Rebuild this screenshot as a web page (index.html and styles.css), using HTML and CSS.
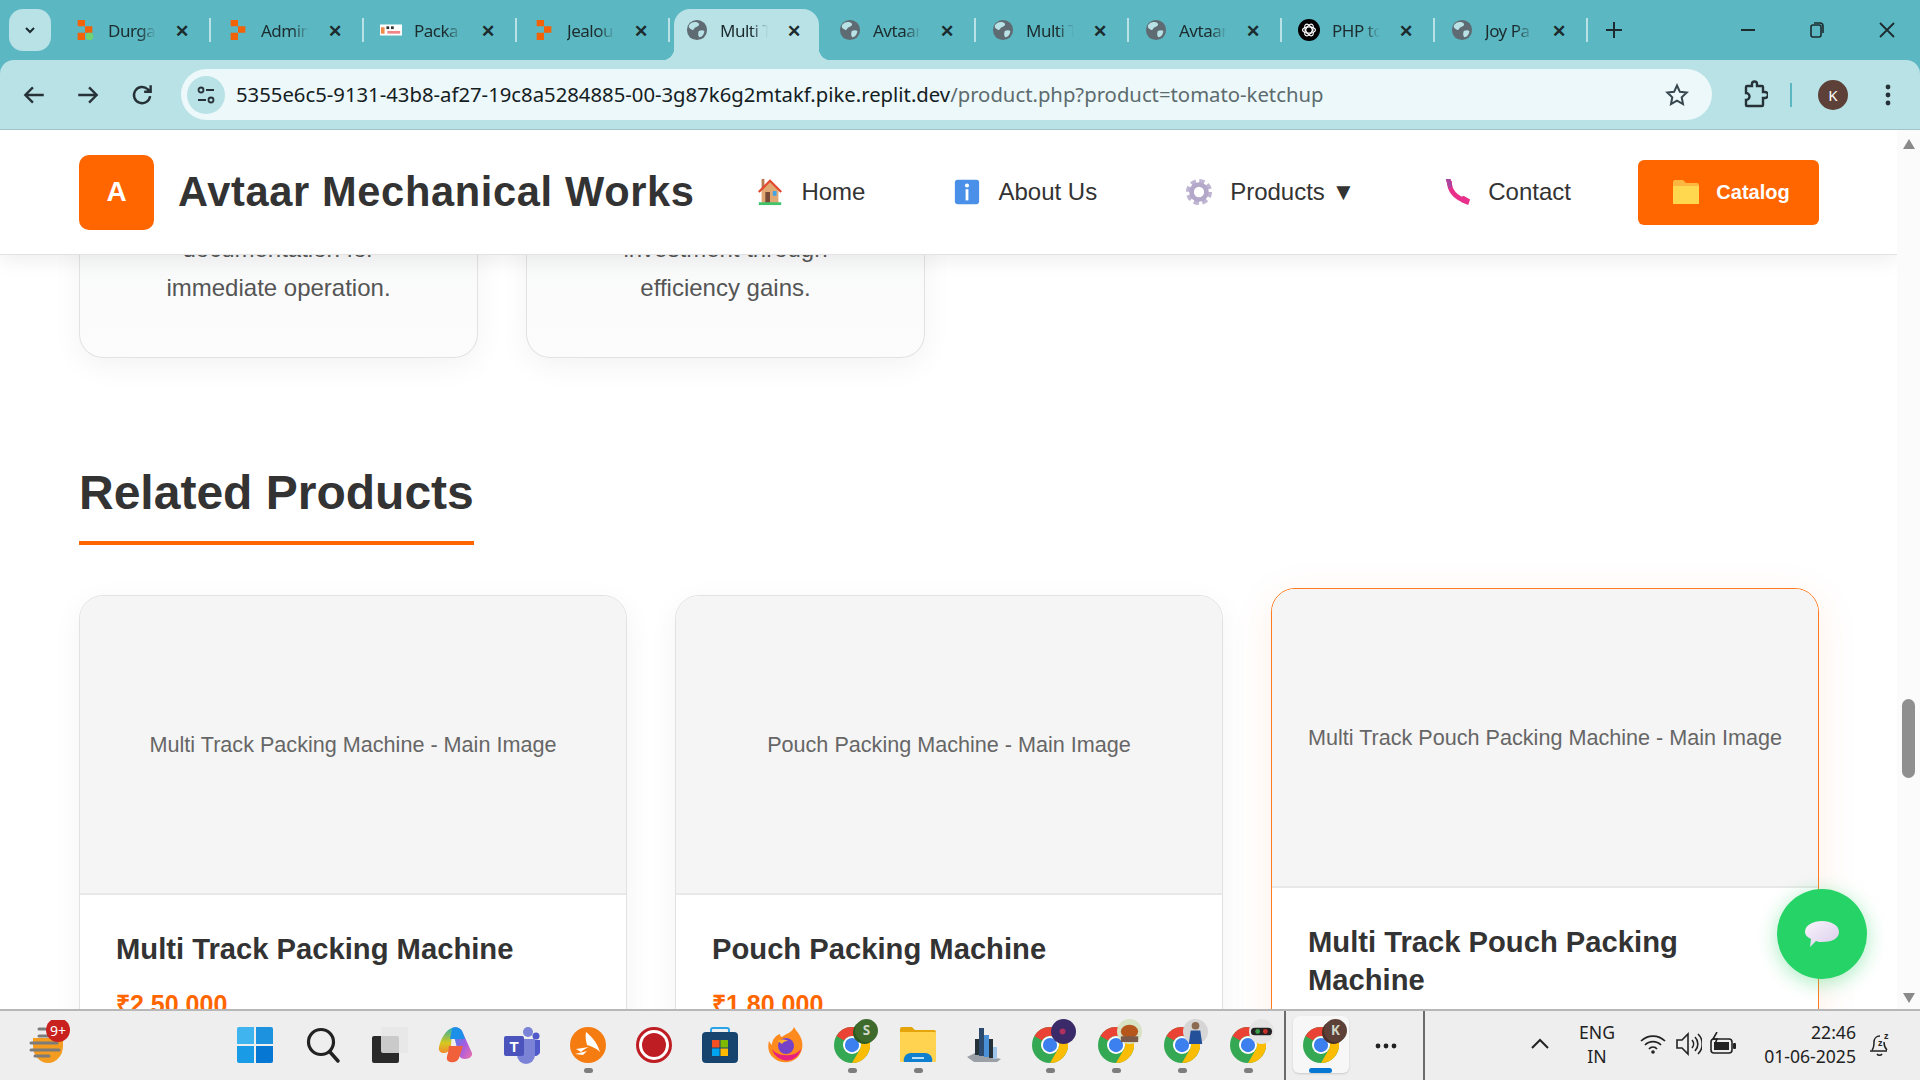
FILE: index.html
```html
<!DOCTYPE html>
<html lang="en">
<head>
  <meta charset="UTF-8">
  <title>Multi Track Pouch Packing Machine</title>
  <link rel="stylesheet" href="styles.css">
</head>
<body>
  <svg class="defs" width="0" height="0">
    <defs>
      <linearGradient id="cop-a" x1="0" y1="0" x2="1" y2="1"><stop offset="0" stop-color="#1c8fe8"/><stop offset=".6" stop-color="#a85ce0"/><stop offset="1" stop-color="#f070a8"/></linearGradient>
      <linearGradient id="cop-b" x1="0" y1="0" x2="0" y2="1"><stop offset="0" stop-color="#2fb0a0"/><stop offset=".6" stop-color="#d8c81e"/><stop offset="1" stop-color="#f08a30"/></linearGradient>
      <linearGradient id="bubble" x1="0" y1="0" x2="1" y2="1"><stop offset="0" stop-color="#f8f4fb"/><stop offset="1" stop-color="#dccdec"/></linearGradient>
    </defs>
    <symbol id="globe" viewBox="0 0 24 24">
      <circle cx="12" cy="12" r="11" fill="#5f6b72"/>
      <path d="M6 4c3-1 6-1 8 1 1 2-1 3-3 4-2 0-2 3-4 3-2-1-4-2-4-4 0-2 2-3 3-4zM14 13c2-1 5-1 6 0 0 3-2 6-5 7-2-1-2-5-1-7z" fill="#b8e2e6"/>
    </symbol>
    <symbol id="replit" viewBox="0 0 24 24">
      <path d="M4 1h8v7H4zM12 8h8v7h-8zM4 15h8v8H4z" fill="#f26207"/>
    </symbol>
    <symbol id="chrome" viewBox="0 0 48 48">
      <circle cx="24" cy="24" r="24" fill="#34a853"/>
      <path d="M24 0a24 24 0 0 1 20.800 12H24a12 12 0 0 0-10.400 6L3.200 12A24 24 0 0 1 24 0z" fill="#ea4335"/>
      <path d="M44.800 12H24a12 12 0 0 1 10.400 18L24 48a24 24 0 0 0 20.800-36z" fill="#fbbc04"/>
      <circle cx="24" cy="24" r="12" fill="#fff"/>
      <circle cx="24" cy="24" r="9.500" fill="#3b80ee"/>
    </symbol>
  </svg>

  <div class="tabstrip">
    <button class="tab-menu"><svg width="14" height="14" viewBox="0 0 14 14"><path d="M3 5l4 4 4-4" fill="none" stroke="#1c2b2e" stroke-width="2"/></svg></button>
    <div class="tab"><svg class="fav" viewBox="0 0 24 24"><use href="#replit"/><circle cx="17" cy="19" r="4" fill="#6fd36f"/></svg><span class="tab-title">Durga</span><span class="tab-x">✕</span></div>
    <div class="tab"><svg class="fav"><use href="#replit"/></svg><span class="tab-title">Admin</span><span class="tab-x">✕</span></div>
    <div class="tab"><svg class="fav" viewBox="0 0 24 24"><rect y="6" width="24" height="12" fill="#fff"/><rect x="1" y="9" width="4" height="7" fill="#f08a4b"/><rect x="7" y="8" width="3" height="3" fill="#333"/><rect x="12" y="8" width="3" height="3" fill="#333"/><rect x="8" y="13" width="14" height="3" fill="#e88"/></svg><span class="tab-title">Packa</span><span class="tab-x">✕</span></div>
    <div class="tab"><svg class="fav"><use href="#replit"/></svg><span class="tab-title">Jealou</span><span class="tab-x">✕</span></div>
    <div class="tab active"><svg class="fav"><use href="#globe"/></svg><span class="tab-title">Multi T</span><span class="tab-x">✕</span></div>
    <div class="tab"><svg class="fav"><use href="#globe"/></svg><span class="tab-title">Avtaar</span><span class="tab-x">✕</span></div>
    <div class="tab"><svg class="fav"><use href="#globe"/></svg><span class="tab-title">Multi T</span><span class="tab-x">✕</span></div>
    <div class="tab"><svg class="fav"><use href="#globe"/></svg><span class="tab-title">Avtaar</span><span class="tab-x">✕</span></div>
    <div class="tab"><svg class="fav" viewBox="0 0 24 24"><circle cx="12" cy="12" r="12" fill="#000"/><g fill="none" stroke="#fff" stroke-width="1.4"><ellipse cx="12" cy="12" rx="7" ry="3.5"/><ellipse cx="12" cy="12" rx="7" ry="3.5" transform="rotate(60 12 12)"/><ellipse cx="12" cy="12" rx="7" ry="3.5" transform="rotate(120 12 12)"/></g></svg><span class="tab-title">PHP to</span><span class="tab-x">✕</span></div>
    <div class="tab"><svg class="fav"><use href="#globe"/></svg><span class="tab-title">Joy Pa</span><span class="tab-x">✕</span></div>
    <span class="tab-plus"><svg width="18" height="18" viewBox="0 0 18 18"><path d="M9 1v16M1 9h16" stroke="#1c2b2e" stroke-width="2"/></svg></span>
    <div class="win-btns">
      <svg width="16" height="16" viewBox="0 0 16 16"><path d="M1 8h14" stroke="#1c2b2e" stroke-width="2"/></svg>
      <svg width="16" height="18" viewBox="0 0 16 18"><rect x="2" y="4" width="10" height="12" rx="2" fill="none" stroke="#1c2b2e" stroke-width="1.6"/><path d="M5 2h6a3 3 0 0 1 3 3v7" fill="none" stroke="#1c2b2e" stroke-width="1.6"/></svg>
      <svg width="18" height="18" viewBox="0 0 18 18"><path d="M2 2l14 14M16 2L2 16" stroke="#1c2b2e" stroke-width="1.8"/></svg>
    </div>
  </div>

  <div class="toolbar">
    <svg class="tool" viewBox="0 0 24 24"><path d="M21 12H4M11 5l-7 7 7 7" fill="none" stroke="#263238" stroke-width="2.2"/></svg>
    <svg class="tool" viewBox="0 0 24 24"><path d="M3 12h17M13 5l7 7-7 7" fill="none" stroke="#263238" stroke-width="2.2"/></svg>
    <svg class="tool" viewBox="0 0 24 24"><path d="M19.5 13a7.5 7.5 0 1 1-2.2-6.3L20 9M20 3v6h-6" fill="none" stroke="#263238" stroke-width="2.2"/></svg>
    <div class="omnibox">
      <span class="site-info"><svg width="20" height="20" viewBox="0 0 20 20"><g fill="none" stroke="#263238" stroke-width="1.8"><circle cx="5" cy="5" r="2.5"/><circle cx="15" cy="15" r="2.5"/><path d="M10 5h8M2 15h8"/></g></svg></span>
      <span class="url"><span class="url-host">5355e6c5-9131-43b8-af27-19c8a5284885-00-3g87k6g2mtakf.pike.replit.dev</span>/product.php?product=tomato-ketchup</span>
      <svg class="star" width="24" height="24" viewBox="0 0 24 24"><path d="M12 2.5l2.9 6.3 6.8.8-5 4.7 1.3 6.8-6-3.4-6 3.4 1.3-6.8-5-4.7 6.8-.8z" fill="none" stroke="#37474f" stroke-width="2"/></svg>
    </div>
    <svg class="ext" width="28" height="30" viewBox="0 0 28 30"><path d="M7 6h5V4a2.500 2.500 0 0 1 5 0v2h5a1 1 0 0 1 1 1v5h2a3 3 0 0 1 0 6h-2v7a1 1 0 0 1-1 1H7a1 1 0 0 1-1-1v-5a3.500 3.500 0 0 0 0-7V7a1 1 0 0 1 1-1z" fill="none" stroke="#263238" stroke-width="2.4"/></svg>
    <span class="tool-sep"></span>
    <span class="avatar">K</span>
    <svg class="kebab" width="6" height="22" viewBox="0 0 6 22"><circle cx="3" cy="3" r="2.400" fill="#263238"/><circle cx="3" cy="11" r="2.400" fill="#263238"/><circle cx="3" cy="19" r="2.400" fill="#263238"/></svg>
  </div>

  <div class="page">
    <div class="content">
      <header class="site-header">
        <div class="brand">
          <span class="brand-mark">A</span>
          <span class="brand-name">Avtaar Mechanical Works</span>
        </div>
        <nav class="nav">
          <a class="nav-item">
            <svg class="nav-icon" viewBox="0 0 30 30"><rect x="6" y="1" width="3" height="11" fill="#b97a50"/><path d="M6 13L15 4l9 9v14H6z" fill="#e0a973"/><path d="M3 15L15 3l12 12" fill="none" stroke="#e2492f" stroke-width="2.500"/><rect x="10" y="15" width="5" height="12" fill="#7a4a38"/><rect x="18" y="14" width="4" height="5" fill="#3fa4e8"/><rect x="3" y="26" width="24" height="3" fill="#3fc46a"/></svg>
            Home
          </a>
          <a class="nav-item">
            <svg class="nav-icon" viewBox="0 0 30 30"><rect x="2" y="2" width="26" height="26" rx="3" fill="#4a90e8"/><circle cx="15" cy="8" r="2.200" fill="#fff"/><rect x="13.500" y="12" width="3" height="12" fill="#fff"/></svg>
            About Us
          </a>
          <a class="nav-item">
            <svg class="nav-icon" viewBox="0 0 30 30"><circle cx="15" cy="15" r="11.500" fill="none" stroke="#bfb5d3" stroke-width="5" stroke-dasharray="5.500 3.530"/><circle cx="15" cy="15" r="8" fill="none" stroke="#b3a8ca" stroke-width="5"/></svg>
            Products ▼
          </a>
          <a class="nav-item">
            <svg class="nav-icon" viewBox="0 0 30 30"><path d="M7 3Q6 18 25 25" fill="none" stroke="#e8308a" stroke-width="5"/><path d="M3 1h5l2 8-4 2zM19 21l3-2 7 4-2 6-7-3z" fill="#e8308a"/><path d="M3 1h5l2 8-4 2z" fill="#a846a0"/></svg>
            Contact
          </a>
          <a class="catalog-btn">
            <svg class="folder" viewBox="0 0 28 26"><path d="M1 3a2 2 0 0 1 2-2h8l3 3h11a2 2 0 0 1 2 2v18a1 1 0 0 1-1 1H2a1 1 0 0 1-1-1z" fill="#fbb73f"/><rect x="1" y="7" width="26" height="18" rx="1" fill="#ffd84f"/></svg>
            Catalog
          </a>
        </nav>
      </header>

      <section class="features">
        <div class="feature-card">
          <p>documentation for</p>
          <p>immediate operation.</p>
        </div>
        <div class="feature-card">
          <p>investment through</p>
          <p>efficiency gains.</p>
        </div>
      </section>

      <section class="related">
        <h2 class="section-title">Related Products</h2>
        <div class="product-grid">
          <article class="product-card">
            <div class="product-image">Multi Track Packing Machine - Main Image</div>
            <div class="product-body">
              <h3>Multi Track Packing Machine</h3>
              <div class="price">₹2,50,000</div>
            </div>
          </article>
          <article class="product-card">
            <div class="product-image">Pouch Packing Machine - Main Image</div>
            <div class="product-body">
              <h3>Pouch Packing Machine</h3>
              <div class="price">₹1,80,000</div>
            </div>
          </article>
          <article class="product-card hovered">
            <div class="product-image">Multi Track Pouch Packing Machine - Main Image</div>
            <div class="product-body">
              <h3>Multi Track Pouch Packing Machine</h3>
            </div>
          </article>
        </div>
      </section>

      <button class="chat-btn"><svg width="36" height="28" viewBox="0 0 36 28"><path d="M18 1c9 0 17 4 17 11s-8 10-17 10c-2 0-4 0-6-1l-6 6 1-8C3 17 1 15 1 12 1 5 9 1 18 1z" fill="url(#bubble)"/></svg></button>
    </div>
    <div class="scrollbar">
      <svg class="sb-arrow" viewBox="0 0 14 12"><path d="M7 1l6 10H1z" fill="#8a8a8a"/></svg>
      <div class="sb-track"><div class="sb-thumb"></div></div>
      <svg class="sb-arrow" viewBox="0 0 14 12"><path d="M7 11L1 1h12z" fill="#8a8a8a"/></svg>
    </div>
  </div>

  <footer class="taskbar">
    <div class="widget">
      <svg width="48" height="48" viewBox="0 0 48 48"><path d="M8 18h30v8a15 17 0 0 1-30 0z" fill="#f39c1f"/><g stroke="#7b7b7b" stroke-width="3" stroke-linecap="round"><path d="M14 9h6M14 16h22M6 23h26M6 30h28M10 36h14"/></g><circle cx="33" cy="10" r="12" fill="#c9211e"/><text x="33" y="16" text-anchor="middle" class="badge-text">9+</text></svg>
    </div>
    <div class="tb-item start"><svg class="tb-icon" viewBox="0 0 36 36"><path d="M0 2a2 2 0 0 1 2-2h15v17H0z" fill="#3fb4ee"/><path d="M19 0h15a2 2 0 0 1 2 2v15H19z" fill="#1d93e0"/><path d="M0 19h17v17H2a2 2 0 0 1-2-2z" fill="#1a9be6"/><path d="M19 19h17v15a2 2 0 0 1-2 2H19z" fill="#0678d4"/></svg></div>
    <div class="tb-item"><svg class="tb-icon" viewBox="0 0 36 36"><circle cx="15" cy="15" r="12.500" fill="none" stroke="#222" stroke-width="3.200"/><path d="M24 25l8 9" stroke="#222" stroke-width="3.500" stroke-linecap="round"/></svg></div>
    <div class="tb-item"><svg class="tb-icon" viewBox="0 0 36 36"><rect y="9" width="27" height="27" rx="2" fill="#2a2a2a"/><rect x="9" y="0" width="27" height="26" rx="2" fill="#e6e6e6" opacity=".85"/></svg></div>
    <div class="tb-item"><svg class="tb-icon" viewBox="0 0 36 36"><path d="M14 1c4-2 8 0 10 3l10 22c1 3-3 6-7 6-5 0-6-3-7-7z" fill="url(#cop-a)"/><path d="M14 1C8 3 3 11 1 20c-1 4 2 6 5 6 4 0 6-3 7-7z" fill="url(#cop-b)"/><path d="M11 19h14l-4 12c-2 5-8 5-11 3-2-2-1-5 0-8z" fill="#f0603a"/><path d="M14 1c4-2 8 0 10 3l3 8H12z" fill="#1c8fe8"/></svg></div>
    <div class="tb-item"><svg class="tb-icon" viewBox="0 0 36 36"><circle cx="24" cy="5" r="5" fill="#7b83d6"/><circle cx="32" cy="9" r="3.500" fill="#5059c9"/><path d="M28 13h8v12a5 5 0 0 1-8 3z" fill="#5059c9"/><path d="M13 12h18v16a8 8 0 0 1-18 0z" fill="#7b83d6"/><rect y="9" width="20" height="20" rx="2" fill="#4b53bc"/><text x="10" y="25" text-anchor="middle" class="teams-t">T</text></svg></div>
    <div class="tb-item"><svg class="tb-icon" viewBox="0 0 36 36"><circle cx="18" cy="18" r="18" fill="#f57c10"/><path d="M16 5c5 4 11 10 14 20-4-4-9-6-13-7-1-4-2-8-1-13zM6 22l13-2c-3 1-6 3-8 5zM5 27l12-3-4 4z" fill="#fff"/></svg><span class="tb-dot"></span></div>
    <div class="tb-item"><svg class="tb-icon" viewBox="0 0 36 36"><circle cx="18" cy="18" r="16.500" fill="#fff" stroke="#bf1d24" stroke-width="3"/><circle cx="18" cy="18" r="12" fill="#bf1d24"/></svg></div>
    <div class="tb-item"><svg class="tb-icon" viewBox="0 0 36 36"><path d="M9 7V3a2 2 0 0 1 2-2h14a2 2 0 0 1 2 2v4" fill="none" stroke="#2aa3e8" stroke-width="2"/><rect y="5" width="36" height="31" rx="4" fill="#17446e"/><rect x="10" y="13" width="7.500" height="7.500" fill="#f25022"/><rect x="18.500" y="13" width="7.500" height="7.500" fill="#7fba00"/><rect x="10" y="21.500" width="7.500" height="7.500" fill="#00a4ef"/><rect x="18.500" y="21.500" width="7.500" height="7.500" fill="#ffb900"/></svg></div>
    <div class="tb-item"><svg class="tb-icon" viewBox="0 0 36 36"><path d="M26 0c2 4 4 5 6 9 4 7 3 16-3 22-6 5-15 6-22 1C1 28-1 21 1 14c1 2 2 3 3 4 0-5 3-9 8-11 0 1 0 2 2 3 3-3 10-4 12-10z" fill="#ff8a1e"/><path d="M4 22c2 8 10 13 19 11 5-2 9-6 10-11-4 5-10 7-16 6-5 0-10-2-13-6z" fill="#e6217f"/><circle cx="18" cy="19" r="8" fill="#7542c8"/><path d="M10 14c3-2 7-2 10 0-3 0-5 1-6 3z" fill="#ffb52e"/></svg></div>
    <div class="tb-item">
      <svg class="tb-icon"><use href="#chrome"/></svg>
      <svg class="tb-badge" viewBox="0 0 26 26"><circle cx="12" cy="14" r="12" fill="#2c5a1f"/><circle cx="14" cy="12" r="12" fill="#3e6b2c"/><text x="14" y="17" text-anchor="middle" class="badge-letter">S</text></svg>
      <span class="tb-dot"></span>
    </div>
    <div class="tb-item"><svg class="tb-icon" viewBox="0 0 36 36"><path d="M0 2a2 2 0 0 1 2-2h10l3 3h19a2 2 0 0 1 2 2v28H0z" fill="#e5a50a"/><rect y="5" width="36" height="30" rx="1" fill="#ffd34f"/><path d="M4 35a7 7 0 0 1 7-9h14a7 7 0 0 1 7 9z" fill="#0f7fd0"/><rect x="12" y="30" width="12" height="2" fill="#b8e0f8"/></svg><span class="tb-dot"></span></div>
    <div class="tb-item"><svg class="tb-icon" viewBox="0 0 36 36"><path d="M1 30l8-4 26 6-4 3H8z" fill="#9aa0a6"/><rect x="9" y="12" width="4" height="16" fill="#26323a"/><rect x="13" y="1" width="5" height="28" fill="#2c4a6e"/><rect x="18" y="8" width="5" height="22" fill="#4a90d8"/><rect x="23" y="12" width="4" height="19" fill="#26323a"/><rect x="27" y="20" width="4" height="12" fill="#9fc6ea"/></svg></div>
    <div class="tb-item">
      <svg class="tb-icon"><use href="#chrome"/></svg>
      <svg class="tb-badge" viewBox="0 0 26 26"><circle cx="13" cy="13" r="13" fill="#3a2a6a"/><circle cx="12" cy="13" r="3" fill="#b03060"/></svg>
      <span class="tb-dot"></span>
    </div>
    <div class="tb-item">
      <svg class="tb-icon"><use href="#chrome"/></svg>
      <svg class="tb-badge" viewBox="0 0 26 26"><circle cx="13" cy="13" r="13" fill="#d8e2c4"/><ellipse cx="13" cy="13" rx="9" ry="7" fill="#b5571c"/><rect x="4" y="18" width="18" height="6" fill="#7a5a4a"/></svg>
      <span class="tb-dot"></span>
    </div>
    <div class="tb-item">
      <svg class="tb-icon"><use href="#chrome"/></svg>
      <svg class="tb-badge" viewBox="0 0 26 26"><circle cx="13" cy="13" r="13" fill="#d6d6d6"/><circle cx="13" cy="7" r="4" fill="#8a6a50"/><path d="M6 26l2-14h10l2 14z" fill="#24509a"/></svg>
      <span class="tb-dot"></span>
    </div>
    <div class="tb-item">
      <svg class="tb-icon"><use href="#chrome"/></svg>
      <svg class="tb-badge" viewBox="0 0 26 26"><circle cx="13" cy="13" r="13" fill="#e4e4e4"/><rect x="2" y="9" width="22" height="8" rx="4" fill="#222"/><circle cx="9" cy="13" r="2.500" fill="#3a9a4a"/><circle cx="17" cy="13" r="2.500" fill="#c9302c"/></svg>
      <span class="tb-dot"></span>
    </div>
    <span class="tb-sep first"></span>
    <div class="tb-active">
      <svg class="tb-icon"><use href="#chrome"/></svg>
      <svg class="tb-badge" viewBox="0 0 26 26"><circle cx="12" cy="14" r="12" fill="#4a3028"/><circle cx="14" cy="12" r="12" fill="#5d4037"/><text x="14" y="17" text-anchor="middle" class="badge-letter">K</text></svg>
      <span class="tb-bar"></span>
    </div>
    <div class="tb-more"><svg width="22" height="6" viewBox="0 0 22 6"><circle cx="3" cy="3" r="2.400" fill="#222"/><circle cx="11" cy="3" r="2.400" fill="#222"/><circle cx="19" cy="3" r="2.400" fill="#222"/></svg></div>
    <span class="tb-sep"></span>
    <div class="tray">
      <svg class="tray-chevron" width="18" height="12" viewBox="0 0 18 12"><path d="M1 10l8-8 8 8" fill="none" stroke="#222" stroke-width="2"/></svg>
      <div class="tray-lang">ENG<br>IN</div>
      <svg class="tray-icon wifi" width="26" height="22" viewBox="0 0 26 22"><g fill="none" stroke="#222" stroke-width="1.700"><path d="M1 8a17 17 0 0 1 24 0M5 12a11 11 0 0 1 16 0M9 16a5 5 0 0 1 8 0"/></g><circle cx="13" cy="19" r="1.800" fill="#222"/></svg>
      <svg class="tray-icon vol" width="26" height="24" viewBox="0 0 26 24"><g fill="none" stroke="#222" stroke-width="1.600"><path d="M1 8h5l6-6v20l-6-6H1zM16 8a6 6 0 0 1 0 8M19 5a10 10 0 0 1 0 14M22 2a14 14 0 0 1 0 20"/></g></svg>
      <svg class="tray-icon" width="26" height="24" viewBox="0 0 26 24"><rect x="1" y="7" width="21" height="14" rx="3" fill="none" stroke="#222" stroke-width="1.600"/><rect x="4" y="10" width="15" height="8" fill="#222"/><rect x="23" y="11" width="3" height="6" rx="1" fill="#222"/><path d="M7 0L3 7h4L5 12" fill="none" stroke="#222" stroke-width="1.600"/></svg>
      <div class="tray-clock">22:46<br>01-06-2025</div>
      <svg class="tray-bell" width="22" height="26" viewBox="0 0 22 26"><path d="M3 19c2-2 2-4 2-8 0-3 2-6 6-6M1 20h17M8 23a3 3 0 0 0 5 0M15 11c0 4 1 6 3 8" fill="none" stroke="#222" stroke-width="1.500"/><text x="9" y="15" class="bell-z">z</text><text x="15" y="8" class="bell-z">z</text></svg>
    </div>
  </footer>
</body>
</html>
```

FILE: styles.css
```css
* {
  box-sizing: border-box;
}
html, body {
  height: 100%;
}
body {
  margin: 0;
  display: flex;
  flex-direction: column;
  overflow: hidden;
  font-family: "Liberation Sans", Arial, sans-serif;
  background: #5bb8c2;
}
.defs {
  position: absolute;
}

/* browser chrome */
.tabstrip {
  height: 60px;
  flex: none;
  display: flex;
  align-items: flex-end;
  font-family: "Noto Sans", sans-serif;
  color: #1c2b2e;
}
.tab-menu {
  flex: none;
  width: 42px;
  height: 42px;
  margin: 0 7px 9px 9px;
  border: none;
  border-radius: 14px;
  background: #b8e2e6;
  display: flex;
  align-items: center;
  justify-content: center;
  padding: 0;
}
.tab {
  flex: none;
  width: 153px;
  height: 51px;
  padding: 0 0 9px 16px;
  display: flex;
  align-items: center;
  position: relative;
  font-size: 17px;
}
.tab::after {
  content: "";
  position: absolute;
  right: 0;
  top: 9px;
  width: 2px;
  height: 24px;
  background: #b8e2e6;
}
.tab .fav {
  width: 22px;
  height: 22px;
  flex: none;
}
.tab-title {
  width: 48px;
  margin-left: 12px;
  overflow: hidden;
  white-space: nowrap;
  letter-spacing: -0.5px;
  -webkit-mask-image: linear-gradient(to right, #000 65%, transparent);
  mask-image: linear-gradient(to right, #000 65%, transparent);
}
.tab-x {
  width: 16px;
  margin-left: 18px;
  font-size: 17px;
  font-weight: bold;
  text-align: center;
}
.tab.active {
  width: 145px;
  margin: 0 4px;
  padding-left: 12px;
  background: #b8e2e6;
  border-radius: 16px 16px 0 0;
}
.tab.active::before, .tab.active::after {
  content: "";
  position: absolute;
  top: auto;
  bottom: 0;
  width: 12px;
  height: 12px;
  background: radial-gradient(circle at 0 0, transparent 12px, #b8e2e6 12.5px);
}
.tab.active::before {
  left: -12px;
}
.tab.active::after {
  right: -12px;
  background: radial-gradient(circle at 100% 0, transparent 12px, #b8e2e6 12.5px);
}
.tab-plus {
  flex: none;
  margin: 0 0 21px 17px;
  height: 18px;
}
.win-btns {
  flex: none;
  width: 298px;
  height: 60px;
  padding: 0 25px 0 117px;
  display: flex;
  align-items: center;
  justify-content: space-between;
}
.toolbar {
  height: 70px;
  flex: none;
  background: #b8e2e6;
  border-radius: 14px 14px 0 0;
  border-bottom: 1px solid #a3c4c8;
  display: flex;
  align-items: center;
  padding: 0 0 0 21px;
}
.tool {
  width: 26px;
  height: 26px;
  margin-right: 28px;
}
.omnibox {
  margin-left: -2px;
  width: 1531px;
  height: 51px;
  border-radius: 26px;
  background: #ecf8f9;
  display: flex;
  align-items: center;
  padding: 0 23px 0 6px;
  font-family: "Noto Sans", sans-serif;
}
.site-info {
  width: 38px;
  height: 38px;
  border-radius: 50%;
  background: #b8e2e6;
  display: flex;
  align-items: center;
  justify-content: center;
}
.url {
  margin: -2px 0 0 11px;
  font-size: 20.3px;
  color: #5c6b6e;
  white-space: nowrap;
}
.url-host {
  color: #14201f;
}
.star {
  margin-left: auto;
}
.ext {
  margin-left: 28px;
}
.tool-sep {
  width: 2px;
  height: 24px;
  background: #5bb8c2;
  margin-left: 22px;
}
.avatar {
  width: 30px;
  height: 30px;
  margin-left: 26px;
  border-radius: 50%;
  background: #5d4037;
  color: #fff;
  font-size: 15px;
  font-family: "Noto Sans", sans-serif;
  display: flex;
  align-items: center;
  justify-content: center;
}
.kebab {
  margin-left: 37px;
}

/* page area */
.page {
  flex: 1;
  min-height: 0;
  display: flex;
  background: #fff;
}
.content {
  flex: 1;
  min-width: 0;
  position: relative;
  overflow: hidden;
  padding: 0 78px 0 79px;
}
.scrollbar {
  width: 23px;
  background: #fbfbfb;
  display: flex;
  flex-direction: column;
  align-items: center;
  padding: 8px 0 5px;
}
.sb-arrow {
  width: 14px;
  height: 12px;
  flex: none;
}
.sb-track {
  flex: 1;
  width: 100%;
  padding: 549px 5px 0 5px;
}
.sb-thumb {
  height: 79px;
  border-radius: 7px;
  background: #8f8f8f;
}

.site-header {
  position: absolute;
  top: 0;
  left: 0;
  right: 0;
  z-index: 2;
  height: 125px;
  padding: 0 78px 0 79px;
  background: #fff;
  border-bottom: 1px solid #e2e2e2;
  box-shadow: 0 4px 20px rgba(0,0,0,0.08);
  display: flex;
  align-items: center;
  justify-content: space-between;
}
.brand {
  display: flex;
  align-items: center;
  gap: 24px;
}
.brand-mark {
  width: 75px;
  height: 75px;
  border-radius: 10px;
  background: #ff6600;
  color: #fff;
  font-size: 28px;
  font-weight: bold;
  display: flex;
  align-items: center;
  justify-content: center;
}
.brand-name {
  font-size: 41.6px;
  font-weight: bold;
  letter-spacing: 0.65px;
  color: #333;
  white-space: nowrap;
}
.nav {
  display: flex;
  align-items: center;
  gap: 88px;
  font-size: 24px;
  color: #333;
}
.nav-item {
  display: flex;
  align-items: center;
  gap: 17px;
  white-space: nowrap;
}
.nav-icon {
  width: 28px;
  height: 28px;
}
.catalog-btn {
  margin-left: -21px;
  width: 181px;
  height: 65px;
  padding-left: 5px;
  border-radius: 6px;
  background: #ff6600;
  color: #fff;
  font-size: 20px;
  font-weight: bold;
  display: flex;
  align-items: center;
  justify-content: center;
  gap: 16px;
}
.folder {
  width: 28px;
  height: 26px;
}

.features {
  display: grid;
  grid-template-columns: repeat(4, 1fr);
  gap: 48px;
}
.feature-card {
  height: 228px;
  padding-top: 99px;
  border: 1px solid #e2e2e2;
  border-top: none;
  border-radius: 0 0 24px 24px;
  background: linear-gradient(#f6f7f9, #fcfcfc);
  box-shadow: 0 8px 30px rgba(0,0,0,0.05);
  text-align: center;
  font-size: 24px;
  color: #555;
}
.feature-card p {
  margin: 0;
  line-height: 39px;
}

.section-title {
  display: inline-block;
  margin: 106px 0 50px;
  padding-bottom: 19px;
  border-bottom: 4px solid #ff6600;
  font-size: 48px;
  line-height: 58px;
  color: #333;
}
.product-grid {
  display: grid;
  grid-template-columns: repeat(3, 1fr);
  gap: 48px;
  align-items: start;
}
.product-card {
  border: 1px solid #e2e2e2;
  border-radius: 24px;
  background: #fff;
  overflow: hidden;
  box-shadow: 0 8px 30px rgba(0,0,0,0.05);
}
.product-card.hovered {
  transform: translateY(-7px);
  border-color: #ff7a1f;
  box-shadow: 0 10px 40px rgba(255,102,0,0.1);
}
.product-image {
  height: 299px;
  background: #f5f5f5;
  border-bottom: 2px solid #e8e8e8;
  display: flex;
  align-items: center;
  justify-content: center;
  font-size: 21.6px;
  color: #666;
}
.product-body {
  padding: 35px 36px 80px;
}
.product-body h3 {
  margin: 0;
  font-size: 29.2px;
  line-height: 38px;
  color: #333;
}
.price {
  margin-top: 18px;
  font-size: 25px;
  font-weight: bold;
  color: #ff6600;
}
.chat-btn {
  position: absolute;
  right: 30px;
  bottom: 30px;
  z-index: 3;
  width: 90px;
  height: 90px;
  padding: 0;
  border: none;
  border-radius: 50%;
  background: #25d366;
  box-shadow: 0 4px 20px rgba(37,211,102,0.4);
  display: flex;
  align-items: center;
  justify-content: center;
}

/* windows taskbar */
.taskbar {
  height: 71px;
  flex: none;
  background: #eeeeee;
  border-top: 2px solid #b7b7b7;
  display: flex;
  align-items: stretch;
}
.widget {
  width: 222px;
  padding: 9px 0 0 25px;
}
.tb-item {
  position: relative;
  flex: none;
  width: 66px;
  display: flex;
  align-items: center;
  justify-content: center;
  padding-bottom: 2px;
}
.tb-item.start {
  width: 69px;
  padding-right: 3px;
}
.tb-icon {
  width: 36px;
  height: 36px;
  overflow: visible;
}
.tb-badge {
  position: absolute;
  top: 8px;
  left: 34px;
  width: 25px;
  height: 25px;
}
.tb-dot {
  position: absolute;
  bottom: 7px;
  left: 29px;
  width: 9px;
  height: 5px;
  border-radius: 3px;
  background: #7d7d7d;
}
.tb-sep {
  width: 2px;
  background: #6b6b6b;
}
.tb-sep.first {
  margin-left: 3px;
}
.tb-active {
  position: relative;
  flex: none;
  width: 56px;
  margin: 5px 0 7px 7px;
  border-radius: 6px;
  background: #f7f7f7;
  box-shadow: 0 1px 2px rgba(0,0,0,0.15);
  display: flex;
  align-items: center;
  justify-content: center;
}
.tb-active .tb-badge {
  top: 3px;
  left: 29px;
}
.tb-bar {
  position: absolute;
  bottom: 0;
  left: 16px;
  width: 23px;
  height: 5px;
  border-radius: 3px;
  background: #0678d4;
}
.tb-more {
  width: 74px;
  display: flex;
  align-items: center;
  justify-content: center;
}
.tray {
  flex: 1;
  display: flex;
  align-items: center;
  padding-bottom: 4px;
  font-family: "Noto Sans", sans-serif;
  font-size: 17.6px;
  line-height: 24px;
  color: #222;
}
.tray-chevron {
  margin-left: 106px;
}
.tray-lang {
  width: 74px;
  margin-left: 11px;
  text-align: center;
}
.tray-icon {
  margin-left: 8px;
}
.tray-icon.wifi {
  margin-left: 6px;
}
.tray-icon.vol {
  margin-left: 10px;
}
.tray-clock {
  width: 100px;
  margin-left: 20px;
  text-align: right;
}
.tray-bell {
  margin-left: 13px;
}
.badge-text {
  font: 14px "Noto Sans", sans-serif;
  fill: #fff;
}
.badge-letter {
  font: bold 14px "Noto Sans", sans-serif;
  fill: #cfd8c8;
}
.teams-t {
  font: bold 15px "Liberation Sans", sans-serif;
  fill: #fff;
}
.bell-z {
  font: bold 9px "Liberation Sans", sans-serif;
  fill: #222;
}
```
